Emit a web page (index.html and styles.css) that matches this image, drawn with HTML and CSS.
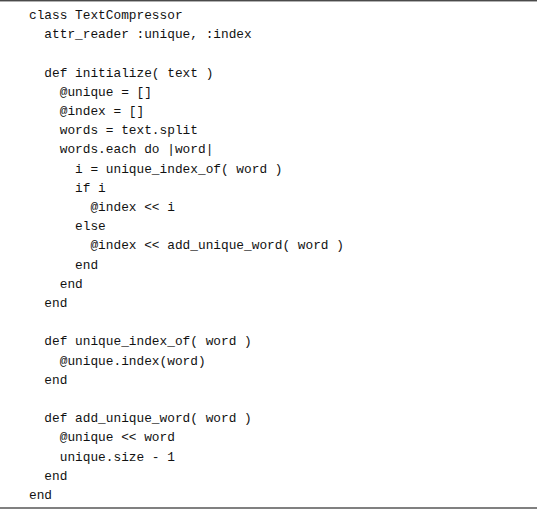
FILE: index.html
```html
<!DOCTYPE html>
<html>
<head>
<meta charset="utf-8">
<link rel="stylesheet" href="styles.css">
</head>
<body>
<div class="listing">
<pre class="code">class TextCompressor
  attr_reader :unique, :index

  def initialize( text )
    @unique = []
    @index = []
    words = text.split
    words.each do |word|
      i = unique_index_of( word )
      if i
        @index &lt;&lt; i
      else
        @index &lt;&lt; add_unique_word( word )
      end
    end
  end

  def unique_index_of( word )
    @unique.index(word)
  end

  def add_unique_word( word )
    @unique &lt;&lt; word
    unique.size - 1
  end
end</pre>
</div>
</body>
</html>
```
FILE: styles.css
```css
html, body {
  margin: 0;
  padding: 0;
  background: #fff;
}
.listing {
  width: 537px;
  height: 509px;
  box-sizing: border-box;
  border-top: 1px solid #4a4a4a;
  border-bottom: 2px solid #808080;
  box-shadow: inset 0 1px 0 #b0b0b0;
}
.code {
  margin: 0;
  padding: 5px 0 0 29px;
  font-family: "Liberation Mono", "Courier New", monospace;
  font-size: 12.8px;
  line-height: 19.2px;
  color: #111;
}
```
